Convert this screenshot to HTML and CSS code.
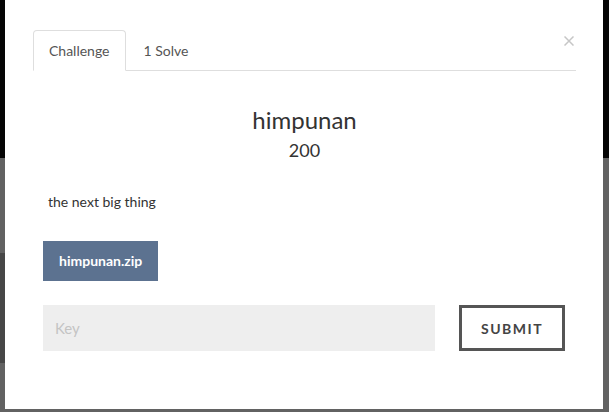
FILE: index.html
```html
<!DOCTYPE html>
<html>
<head>
<meta charset="utf-8">
<link rel="stylesheet" href="styles.css">
</head>
<body>
<div class="page">
  <div class="topbar"></div>
  <div class="page-body">
    <div class="card-dim"></div>
  </div>
</div>
<div class="modal">
  <button class="close" aria-label="Close">
    <svg width="10" height="10" viewBox="0 0 10 10"><path d="M0.5 0.5 L9.5 9.5 M9.5 0.5 L0.5 9.5" stroke="#c6c6c6" stroke-width="1.5" fill="none"/></svg>
  </button>
  <ul class="tabs">
    <li class="tab active">Challenge</li>
    <li class="tab">1 Solve</li>
  </ul>
  <div class="tab-content">
    <h3 class="title">himpunan</h3>
    <h4 class="value">200</h4>
    <p class="desc">the next big thing</p>
    <a class="file-btn">himpunan.zip</a>
    <form class="submit-row">
      <input class="key-input" type="text" placeholder="Key">
      <button class="submit-btn" type="button">SUBMIT</button>
    </form>
  </div>
</div>
</body>
</html>
```

FILE: styles.css
```css
html, body {
  margin: 0;
  padding: 0;
}
body {
  width: 609px;
  height: 412px;
  overflow: hidden;
  font-family: "Lato", "Noto Sans", sans-serif;
  background: #606060;
  position: relative;
}
.page {
  display: flex;
  flex-direction: column;
  height: 412px;
}
.topbar {
  height: 158px;
  background: #050505;
}
.page-body {
  flex: 1;
  background: #626262;
}
.card-dim {
  margin-top: 95px;
  height: 110px;
  width: 40px;
  background: #474747;
}
.modal {
  position: absolute;
  left: 5px;
  top: 0;
  width: 598px;
  height: 409px;
  background: #fff;
  box-sizing: border-box;
  padding: 30px 27px 0 28px;
}
.close {
  position: absolute;
  top: 36px;
  right: 29px;
  width: 10px;
  height: 10px;
  padding: 0;
  border: 0;
  background: none;
  line-height: 0;
}
.tabs {
  list-style: none;
  margin: 0;
  padding: 0;
  display: flex;
  gap: 2px;
  height: 40px;
  border-bottom: 1px solid #dedede;
}
.tab {
  height: 41px;
  box-sizing: border-box;
  padding: 0 15px;
  line-height: 39px;
  font-size: 14px;
  color: #555;
  border: 1px solid transparent;
  border-radius: 4px 4px 0 0;
}
.tab.active {
  border-color: #dedede;
  border-bottom-color: #fff;
  background: #fff;
}
.tab-content {
  display: flex;
  flex-direction: column;
  align-items: flex-start;
}
.title {
  align-self: stretch;
  margin: 35px 0 0;
  font-size: 24px;
  font-weight: 400;
  line-height: 1.2;
  text-align: center;
  color: #333;
}
.value {
  align-self: stretch;
  margin: 5px 0 0;
  font-size: 18px;
  font-weight: 400;
  line-height: 1.2;
  text-align: center;
  color: #333;
}
.desc {
  margin: 31px 0 0;
  padding-left: 15px;
  font-size: 14px;
  line-height: 20px;
  color: #333;
}
.file-btn {
  margin: 29px 0 0 10px;
  height: 40px;
  line-height: 40px;
  padding: 0 16px;
  background: #5c7290;
  color: #fff;
  font-weight: 700;
  font-size: 14px;
}
.submit-row {
  margin: 24px 0 0 10px;
  display: flex;
  gap: 24px;
}
.key-input {
  width: 392px;
  height: 46px;
  box-sizing: border-box;
  border: 0;
  background: #eee;
  padding: 0 12px;
  font-family: "Lato", sans-serif;
  font-size: 15px;
  color: #555;
  outline: none;
}
.key-input::placeholder {
  color: #c4c4c4;
}
.submit-btn {
  width: 106px;
  height: 46px;
  box-sizing: border-box;
  border: 3px solid #555;
  background: #fff;
  font-family: "Lato", sans-serif;
  font-weight: 700;
  font-size: 14px;
  letter-spacing: 1.5px;
  color: #444;
  padding: 0;
}
```
